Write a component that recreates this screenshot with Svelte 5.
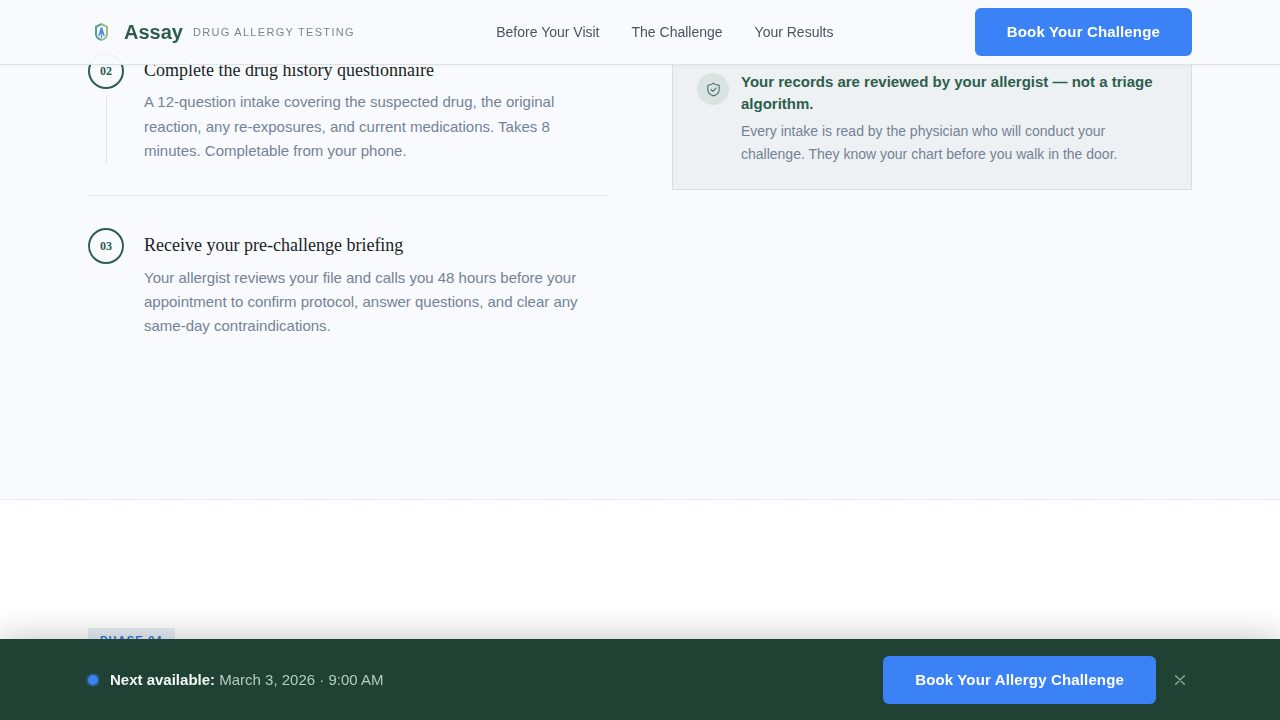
<script>
  const steps = [
    {
      n: '02',
      title: 'Complete the drug history questionnaire',
      text: 'A 12-question intake covering the suspected drug, the original reaction, any re-exposures, and current medications. Takes 8 minutes. Completable from your phone.'
    },
    {
      n: '03',
      title: 'Receive your pre-challenge briefing',
      text: 'Your allergist reviews your file and calls you 48 hours before your appointment to confirm protocol, answer questions, and clear any same-day contraindications.'
    }
  ];
  const links = ['Before Your Visit', 'The Challenge', 'Your Results'];
  let barOpen = $state(true);
</script>

<header class="nav">
  <div class="nav-inner">
    <a class="brand" href="#top">
      <svg class="logo" viewBox="0 0 28 28" width="28" height="28" fill="none">
        <path d="M13.500 6L8 8.800v7.400c0 2.700 2.200 4.700 5.500 5.800" stroke="#5b9d96" stroke-width="2"/>
        <path d="M13.500 6L19 8.800v7.400c0 2.700-2.200 4.700-5.500 5.800" stroke="#9dbd7e" stroke-width="2"/>
        <path d="M13.500 9.500L10.800 18M13.500 9.500L16.200 18M11.700 15h3.600M13.500 9.500V20" stroke="#4a90e2" stroke-width="1.400"/>
      </svg>
      <span class="word">Assay</span>
      <span class="tag">DRUG ALLERGY TESTING</span>
    </a>
    <nav class="links">
      {#each links as l}
        <a href="#top">{l}</a>
      {/each}
    </nav>
    <button class="cta nav-cta">Book Your Challenge</button>
  </div>
</header>

<main>
  <section class="prep">
    <div class="cols">
      <div class="steps">
        {#each steps as s, i}
          <div class="step" class:last={i === steps.length - 1}>
            <div class="marker">
              <span class="num">{s.n}</span>
              {#if i < steps.length - 1}<span class="line"></span>{/if}
            </div>
            <div class="body">
              <h3>{s.title}</h3>
              <p>{s.text}</p>
            </div>
          </div>
        {/each}
      </div>
      <aside class="note">
        <span class="note-icon">
          <svg viewBox="0 0 24 24" width="17" height="17" fill="none" stroke="#2d5a4a" stroke-width="1.500" stroke-linecap="round" stroke-linejoin="round" opacity="0.85">
            <path d="M12 3l2.500 1.800L20 6v6c0 4.500-3.200 7.500-8 9-4.800-1.500-8-4.500-8-9V6l5.500-1.200z"/>
            <path d="M8.500 12l2.500 2.500 4.500-4.500"/>
          </svg>
        </span>
        <div>
          <strong>Your records are reviewed by your allergist — not a triage algorithm.</strong>
          <p>Every intake is read by the physician who will conduct your challenge. They know your chart before you walk in the door.</p>
        </div>
      </aside>
    </div>
  </section>
  <section class="next">
    <span class="phase">PHASE 04</span>
  </section>
</main>

{#if barOpen}
  <div class="bar">
    <div class="avail">
      <span class="dot"></span>
      <span><b>Next available:</b> March 3, 2026 · 9:00 AM</span>
    </div>
    <div class="bar-right">
      <button class="cta">Book Your Allergy Challenge</button>
      <button class="close" aria-label="Dismiss" onclick={() => (barOpen = false)}>
        <svg viewBox="0 0 10 10" width="10" height="10" fill="none" stroke="#8fb3a5" stroke-width="1.200" stroke-linecap="round">
          <path d="M0.500 0.500l9 9M9.500 0.500l-9 9"/>
        </svg>
      </button>
    </div>
  </div>
{/if}

<style>
  :global(body) {
    font-family: "Liberation Sans", Arial, sans-serif;
    background: #fff;
    height: 720px;
    overflow: hidden;
  }

  .nav {
    position: fixed;
    top: 0;
    left: 0;
    right: 0;
    z-index: 10;
    height: 64px;
    background: rgba(248, 250, 253, 0.97);
    border-bottom: 1px solid #dde2e6;
    box-shadow: 0 1px 4px rgba(0, 0, 0, 0.04);
  }

  .nav-inner {
    width: 1104px;
    height: 100%;
    margin: 0 auto;
    display: flex;
    align-items: center;
    justify-content: space-between;
  }

  .brand {
    display: flex;
    align-items: center;
    text-decoration: none;
  }

  .logo {
    width: 28px;
    height: 28px;
    margin-right: 8px;
  }

  .word {
    font-size: 20px;
    font-weight: 700;
    color: #2d5e4d;
  }

  .tag {
    margin-left: 10px;
    font-size: 11px;
    letter-spacing: 1.3px;
    color: #7a8490;
  }

  .links {
    display: flex;
    gap: 32px;
  }

  .links a {
    font-size: 14px;
    color: #4a5560;
    text-decoration: none;
  }

  .cta {
    height: 48px;
    padding: 0 32px 1px;
    border: none;
    border-radius: 6px;
    background: #3b82f6;
    color: #fff;
    font-family: inherit;
    font-size: 15px;
    font-weight: 700;
    letter-spacing: 0.15px;
  }

  .prep {
    background-color: #f8fafd;
    background-image: linear-gradient(90deg, #eef0f3 0 24px, #e3e6ea 24px 48px);
    background-size: 48px 1px;
    background-position: 88px 100%;
    background-repeat: repeat-x;
    height: 500px;
    padding-top: 53px;
    box-sizing: border-box;
  }

  .cols {
    width: 1104px;
    margin: 0 auto;
    display: grid;
    grid-template-columns: 520px 520px;
    gap: 64px;
  }

  .step {
    display: flex;
    gap: 20px;
    padding-bottom: 32px;
    margin-bottom: 32px;
    border-bottom: 1px solid #e4e8eb;
  }

  .step.last {
    border-bottom: none;
    margin-bottom: 0;
  }

  .marker {
    display: flex;
    flex-direction: column;
    align-items: center;
    flex: none;
    width: 36px;
  }

  .num {
    box-sizing: border-box;
    width: 36px;
    height: 36px;
    flex: none;
    display: flex;
    align-items: center;
    justify-content: center;
    border: 2px solid #2d5e4d;
    border-radius: 50%;
    font-family: "Liberation Serif", serif;
    font-size: 12px;
    font-weight: 700;
    color: #2d5e4d;
  }

  .line {
    width: 1px;
    flex: 1;
    margin-top: 8px;
    background: #dde2e6;
  }

  .body h3 {
    margin: 6px 0 9.3px;
    font-family: "Liberation Serif", serif;
    font-size: 18px;
    font-weight: 400;
    line-height: 22px;
    color: #1a1f24;
  }

  .body p {
    margin: 0;
    font-size: 15px;
    line-height: 24.375px;
    color: #758295;
  }

  .note {
    align-self: start;
    display: flex;
    gap: 12px;
    padding: 18px 24px;
    background: #edf1f3;
    border: 1px solid #d8dee1;
    margin-top: -1px;
    height: 138px;
    box-sizing: border-box;
  }

  .note-icon {
    flex: none;
    width: 32px;
    height: 32px;
    margin-top: 2px;
    border-radius: 50%;
    background: #d9e3e1;
    display: flex;
    align-items: center;
    justify-content: center;
  }

  .note strong {
    display: block;
    font-size: 15px;
    line-height: 22px;
    color: #2d5e4d;
  }

  .note p {
    margin: 5px 0 0;
    font-size: 14px;
    line-height: 23px;
    color: #758295;
  }

  .next {
    background: #fff;
    height: 220px;
    box-sizing: border-box;
    padding: 128px 88px 0;
  }

  .phase {
    display: inline-block;
    padding: 6px 12px;
    background: #e6edf5;
    font-size: 11px;
    font-weight: 700;
    letter-spacing: 1.2px;
    color: #2f76d2;
  }

  .bar {
    position: fixed;
    left: 0;
    right: 0;
    bottom: 0;
    z-index: 10;
    height: 81px;
    box-sizing: border-box;
    padding: 0 88px;
    display: flex;
    align-items: center;
    justify-content: space-between;
    background: #1f4235;
    box-shadow: 0 -4px 32px rgba(0, 0, 0, 0.2);
  }

  .avail {
    display: flex;
    align-items: center;
    gap: 12px;
    font-size: 15px;
    color: #b5cbc2;
  }

  .avail b {
    color: #f3f7f5;
  }

  .dot {
    width: 10px;
    height: 10px;
    border-radius: 50%;
    background: #3b82f6;
    box-shadow: 0 0 0 2px rgba(59, 130, 246, 0.3);
  }

  .bar-right {
    display: flex;
    align-items: center;
    gap: 16px;
  }

  .close {
    width: 16px;
    height: 16px;
    padding: 0;
    margin-right: 4px;
    border: none;
    background: none;
    display: flex;
    align-items: center;
    justify-content: center;
  }
</style>
